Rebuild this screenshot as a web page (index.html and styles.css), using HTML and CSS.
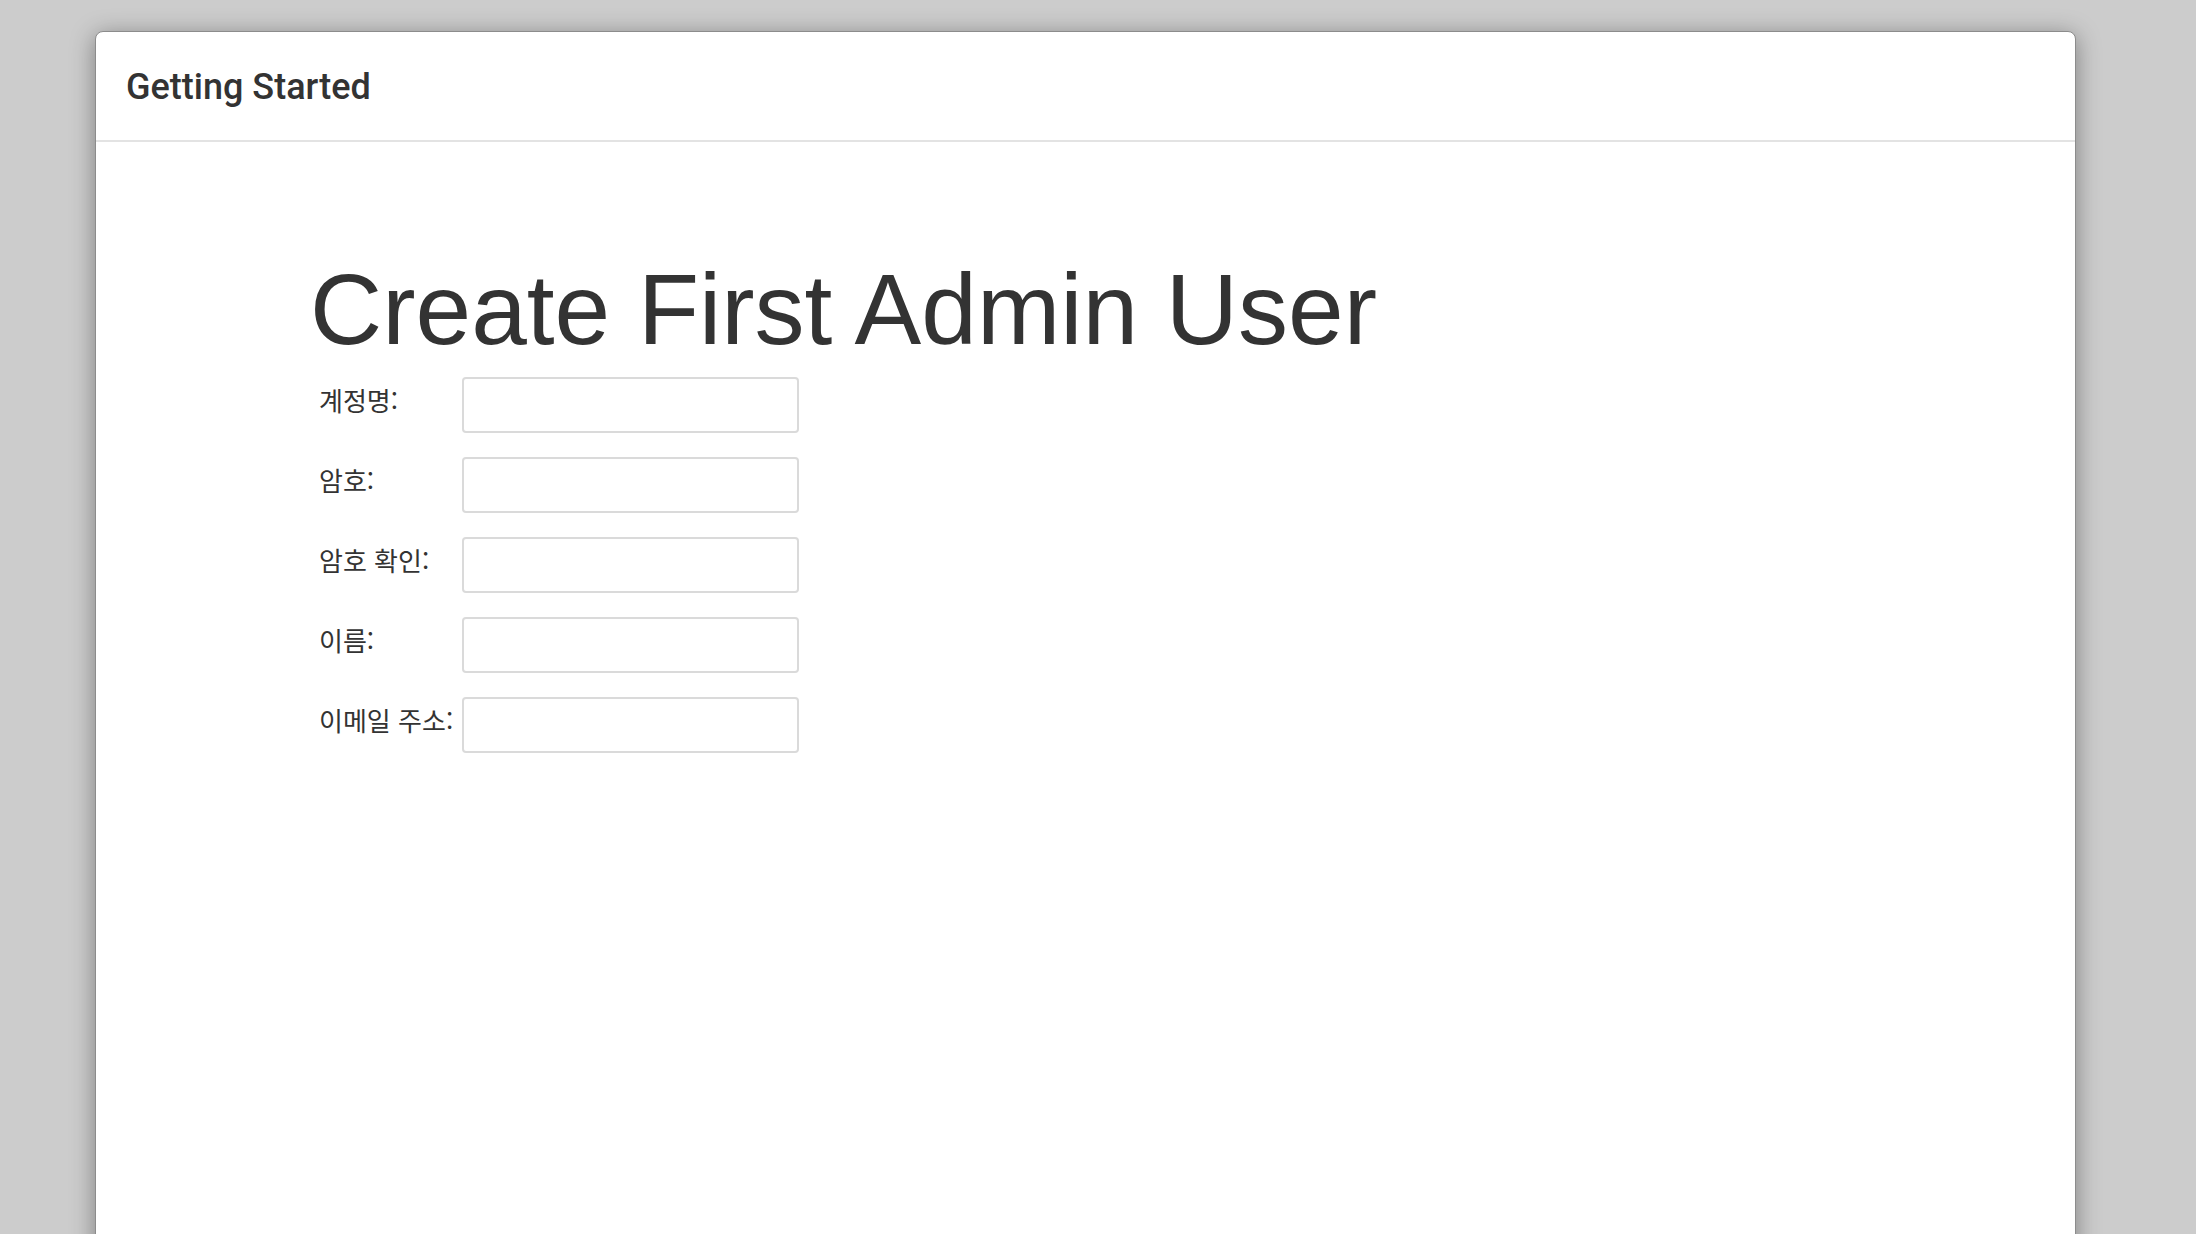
FILE: index.html
```html
<!DOCTYPE html>
<html lang="ko">
<head>
<meta charset="utf-8">
<title>Getting Started</title>
<link rel="stylesheet" href="styles.css">
</head>
<body>
<div class="card">
  <header class="card-header">
    <h2 class="card-title">Getting Started</h2>
  </header>
  <main class="card-body">
    <h1 class="page-title">Create First Admin User</h1>
    <form class="admin-form">
      <label class="field-label" for="username">계정명:</label>
      <input class="field-input" id="username" type="text">
      <label class="field-label" for="password1">암호:</label>
      <input class="field-input" id="password1" type="password">
      <label class="field-label" for="password2">암호 확인:</label>
      <input class="field-input" id="password2" type="password">
      <label class="field-label" for="fullname">이름:</label>
      <input class="field-input" id="fullname" type="text">
      <label class="field-label" for="email">이메일 주소:</label>
      <input class="field-input" id="email" type="text">
    </form>
  </main>
</div>
</body>
</html>
```
FILE: styles.css
```css
html, body {
  margin: 0;
  padding: 0;
  height: 100%;
  overflow: hidden;
}
body {
  background: #cccccc;
  color: #333333;
}
.card {
  box-sizing: border-box;
  margin: 31px 120px 0 95px;
  height: 1300px;
  background: #ffffff;
  border: 1px solid #8c8c8c;
  border-radius: 8px;
  box-shadow: 0 4px 24px rgba(0, 0, 0, 0.38);
  overflow: hidden;
}
.card-header {
  height: 108px;
  display: flex;
  align-items: center;
  padding-left: 30px;
  border-bottom: 2px solid #e3e3e3;
}
.card-title {
  margin: 2px 0 0 0;
  font-family: Roboto, "Noto Sans", sans-serif;
  font-weight: 500;
  font-size: 36px;
  color: #333333;
}
.card-body {
  padding: 117px 0 0 214px;
}
.page-title {
  margin: 0 0 18px 0;
  font-family: "Liberation Sans", Arial, sans-serif;
  font-weight: 400;
  font-size: 100px;
  line-height: 1;
  color: #333333;
}
.admin-form {
  display: grid;
  grid-template-columns: 143px 337px;
  row-gap: 24px;
  margin-left: 9px;
  justify-content: start;
}
.field-label {
  font-family: "Noto Sans CJK KR", "Noto Sans", sans-serif;
  font-size: 26px;
  line-height: 1;
  padding-top: 10px;
  white-space: nowrap;
  color: #333333;
}
.field-input {
  box-sizing: border-box;
  width: 337px;
  height: 56px;
  margin: 0;
  border: 2px solid #dadada;
  border-radius: 4px;
  background: #ffffff;
  padding: 0 8px;
  font-size: 22px;
}
```
